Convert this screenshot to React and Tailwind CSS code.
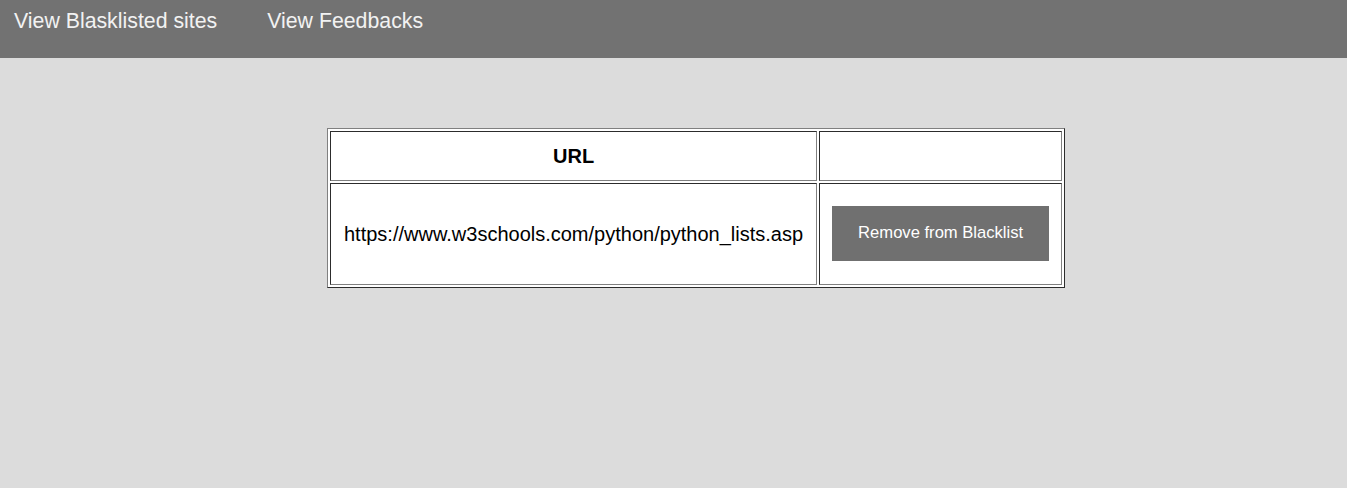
export default function App() {
  const rows = ['https://www.w3schools.com/python/python_lists.asp'];

  return (
    <div className="min-h-[488px] bg-[#dcdcdc] font-['Liberation_Sans',Arial,sans-serif]">
      {/* Top nav */}
      <div className="h-[58px] bg-[#727272] flex items-start pl-[14px] pt-[9px] gap-[50px] text-[21.3px] leading-[24px] text-[#f2f2f2]">
        <a href="#">View Blasklisted sites</a>
        <a href="#">View Feedbacks</a>
      </div>

      {/* Blacklist table */}
      <table className="ml-[327px] mt-[70px] border-separate border-spacing-[2px] border border-[#808080] [border-style:outset] bg-white">
        <thead>
          <tr>
            <th className="border border-[#808080] [border-style:inset] px-[13px] py-[12.5px] text-[20px] leading-[23px] font-bold text-black">
              URL
            </th>
            <th className="border border-[#808080] [border-style:inset]"></th>
          </tr>
        </thead>
        <tbody>
          {rows.map((url) => (
            <tr key={url}>
              <td className="border border-[#808080] [border-style:inset] px-[13px] text-[20px] leading-[23px] text-black text-center">
                {url}
              </td>
              <td className="border border-[#808080] [border-style:inset] px-[12px] pt-[22px] pb-[23px]">
                <button className="block w-[217px] h-[55px] bg-[#707070] text-white text-[16.6px]">
                  Remove from Blacklist
                </button>
              </td>
            </tr>
          ))}
        </tbody>
      </table>
    </div>
  );
}
